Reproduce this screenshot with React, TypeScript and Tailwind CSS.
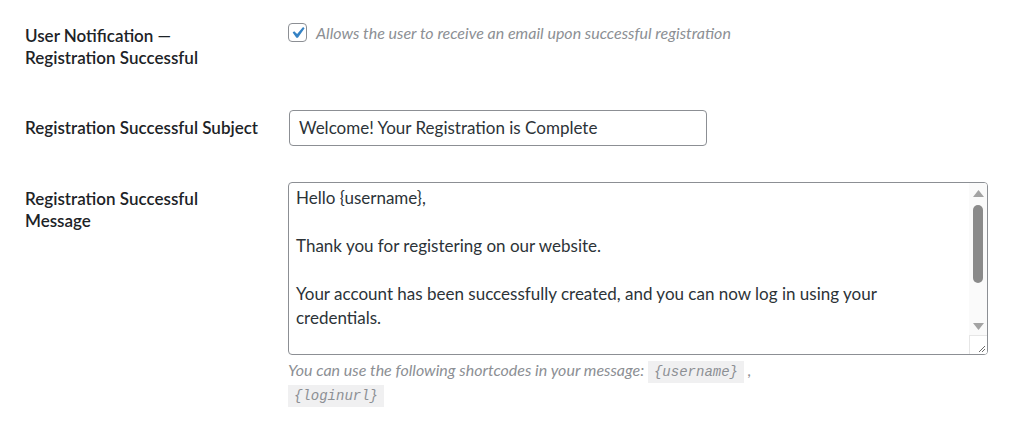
import React from "react";

const sans = { fontFamily: '"Segoe UI", Lato, "Noto Sans", sans-serif' };
const mono = { fontFamily: 'Consolas, "Liberation Mono", monospace' };

function CheckBox() {
  return (
    <span className="flex h-[19px] w-[19px] shrink-0 items-center justify-center rounded-[4px] border border-[#8c8f94] bg-white">
      <svg width="24" height="24" viewBox="0 0 20 20" className="-m-[3px]">
        <path d="M14.83 4.89l1.34.94-5.81 8.38H9.02L5.78 9.67l1.34-1.25 2.57 2.4z" fill="#3582c4" />
      </svg>
    </span>
  );
}

function ScrollBar() {
  return (
    <div className="flex w-[18px] shrink-0 flex-col items-center bg-[#fafafa]">
      <svg className="mt-[7px]" width="11" height="7" viewBox="0 0 11 7">
        <path d="M5.5 0L11 7H0z" fill="#a3a3a3" />
      </svg>
      <div className="mt-[8px] h-[78px] w-[10px] rounded-full bg-[#8a8a8a]" />
      <div className="flex-1" />
      <svg className="mb-[5px]" width="11" height="7" viewBox="0 0 11 7">
        <path d="M0 0H11L5.5 7z" fill="#a3a3a3" />
      </svg>
      <div className="flex h-[19px] w-[18px] items-end justify-end border-t border-l border-[#e6e6e6] bg-white pb-[2px] pr-[2px]">
        <svg width="7" height="7" viewBox="0 0 7 7">
          <path d="M1 7L7 1M4 7L7 4" stroke="#6b6b6b" strokeWidth="1" />
        </svg>
      </div>
    </div>
  );
}

export default function App() {
  return (
    <div className="min-h-[437px] w-[1024px] bg-white pl-[25px] pt-[25px]" style={sans}>
      {/* Notification toggle */}
      <div className="flex">
        <div className="w-[263px] shrink-0 text-[17px] font-semibold leading-[22px] text-[#1d2327]">
          User Notification —<br />Registration Successful
        </div>
        <div className="-mt-[2px] flex items-start gap-[9px]">
          <CheckBox />
          <span className="text-[16px] italic leading-[20px] text-[#8c8f94]">
            Allows the user to receive an email upon successful registration
          </span>
        </div>
      </div>

      {/* Subject */}
      <div className="mt-[41px] flex">
        <div className="w-[264px] shrink-0 pt-[7px] text-[17px] font-semibold leading-[22px] text-[#1d2327]">
          Registration Successful Subject
        </div>
        <div className="flex h-[36px] w-[418px] items-center rounded-[4px] border border-[#8c8f94] bg-white px-[9px] text-[17px] text-[#2c3338]">
          Welcome! Your Registration is Complete
        </div>
      </div>

      {/* Message */}
      <div className="mt-[36px] flex">
        <div className="w-[263px] shrink-0 pt-[6px] text-[17px] font-semibold leading-[22px] text-[#1d2327]">
          Registration Successful
          <br />
          Message
        </div>
        <div className="flex w-[700px] flex-col">
          <div className="flex h-[173px] overflow-hidden rounded-[4px] border border-[#8c8f94] bg-white">
            <div className="flex-1 pl-[7px] pt-[3px] text-[17px] leading-[24px] text-[#2c3338]">
              <div>Hello {"{username}"},</div>
              <div>&nbsp;</div>
              <div>Thank you for registering on our website.</div>
              <div>&nbsp;</div>
              <div>Your account has been successfully created, and you can now log in using your</div>
              <div>credentials.</div>
            </div>
            <ScrollBar />
          </div>
          <div className="mt-[4px] text-[16px] italic leading-[22px] text-[#8c8f94]">
            You can use the following shortcodes in your message:{" "}
            <code className="bg-[#f0f0f1] px-[6px] py-[3px] text-[14px] italic text-[#8c8f94]" style={mono}>
              {"{username}"}
            </code>{" "}
            ,
            <br />
            <code className="bg-[#f0f0f1] px-[6px] py-[3px] text-[14px] italic text-[#8c8f94]" style={mono}>
              {"{loginurl}"}
            </code>
          </div>
        </div>
      </div>
    </div>
  );
}
